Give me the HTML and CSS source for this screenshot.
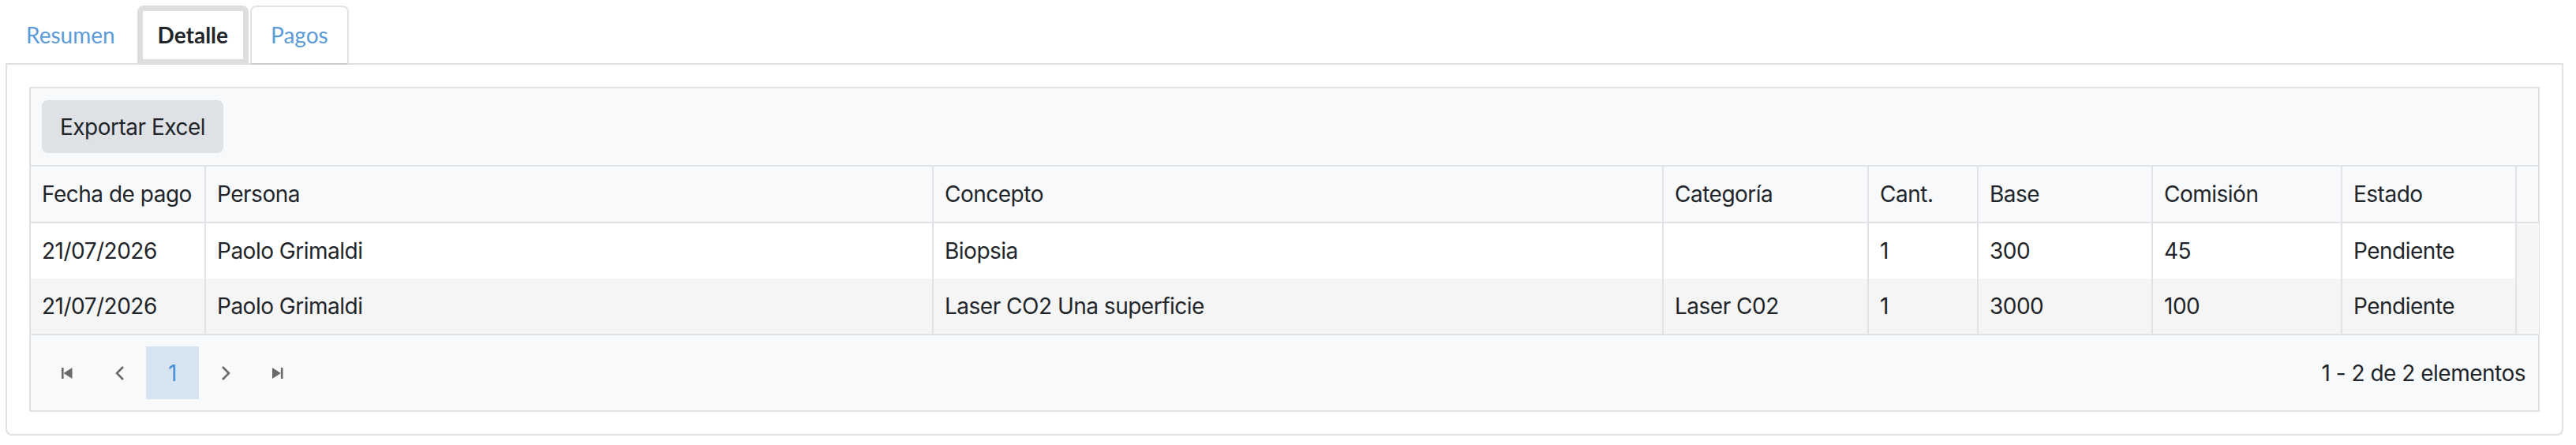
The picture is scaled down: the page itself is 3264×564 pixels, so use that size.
FILE: index.html
```html
<!DOCTYPE html>
<html lang="es">
<head>
<meta charset="utf-8">
<title>Detalle</title>
<link rel="stylesheet" href="styles.css">
</head>
<body>
<div class="tabs">
  <div class="tab">Resumen</div>
  <div class="tab tab-active">Detalle</div>
  <div class="tab tab-plain">Pagos</div>
</div>
<div class="panel">
  <div class="grid">
    <div class="toolbar">
      <button class="btn" type="button">Exportar Excel</button>
    </div>
    <div class="row head">
      <div class="cell">Fecha de pago</div>
      <div class="cell">Persona</div>
      <div class="cell">Concepto</div>
      <div class="cell">Categoría</div>
      <div class="cell">Cant.</div>
      <div class="cell">Base</div>
      <div class="cell">Comisión</div>
      <div class="cell">Estado</div>
      <div class="cell"></div>
    </div>
    <div class="body">
      <div class="row">
        <div class="cell">21/07/2026</div>
        <div class="cell">Paolo Grimaldi</div>
        <div class="cell">Biopsia</div>
        <div class="cell"></div>
        <div class="cell">1</div>
        <div class="cell">300</div>
        <div class="cell">45</div>
        <div class="cell">Pendiente</div>
        <div class="cell gutter"></div>
      </div>
      <div class="row row-alt">
        <div class="cell">21/07/2026</div>
        <div class="cell">Paolo Grimaldi</div>
        <div class="cell">Laser CO2 Una superficie</div>
        <div class="cell">Laser C02</div>
        <div class="cell">1</div>
        <div class="cell">3000</div>
        <div class="cell">100</div>
        <div class="cell">Pendiente</div>
        <div class="cell gutter"></div>
      </div>
    </div>
    <div class="pager">
      <div class="pager-nav">
        <span class="pbtn" aria-label="Primera página">
          <svg width="16" height="16" viewBox="0 0 16 16"><rect x="1" y="1" width="2.6" height="14" fill="currentColor"/><polygon points="14.5,1 3.6,8 14.5,15" fill="currentColor"/></svg>
        </span>
        <span class="pbtn" aria-label="Anterior">
          <svg width="14" height="20" viewBox="0 0 14 20"><polyline points="11,2 3,10 11,18" fill="none" stroke="currentColor" stroke-width="2.6"/></svg>
        </span>
        <span class="pbtn pbtn-current">1</span>
        <span class="pbtn" aria-label="Siguiente">
          <svg width="14" height="20" viewBox="0 0 14 20"><polyline points="3,2 11,10 3,18" fill="none" stroke="currentColor" stroke-width="2.6"/></svg>
        </span>
        <span class="pbtn" aria-label="Última página">
          <svg width="16" height="16" viewBox="0 0 16 16"><polygon points="0,1 10.9,8 0,15" fill="currentColor"/><rect x="10.9" y="1" width="2.6" height="14" fill="currentColor"/></svg>
        </span>
      </div>
      <div class="pager-info">1 - 2 de 2 elementos</div>
    </div>
  </div>
</div>
</body>
</html>
```
FILE: styles.css
```css
body {
  margin: 7px 16px 0 7px;
  font-family: Inter, "Noto Sans", sans-serif;
  color: #212529;
  background: #fff;
}

.tabs {
  display: flex;
  gap: 2px;
  margin-bottom: -2px;
  position: relative;
  z-index: 1;
  font-family: Lato, "Noto Sans", sans-serif;
  font-size: 28px;
  line-height: 43px;
}

.tab {
  padding: 14px 24px;
  border: 2px solid transparent;
  border-radius: 8px 8px 0 0;
  color: #5b9bd8;
}

.tab-active {
  border-color: #dedede;
  box-shadow: inset 0 0 0 5px #dedede;
  background: #fff;
  color: #212529;
  font-weight: 700;
}

.tab-plain {
  border-color: #e3e3e3;
  border-bottom-color: #cdcdcd;
  background: #fff;
}

.panel {
  border: 2px solid #e0e0e0;
  border-radius: 0 0 8px 8px;
  padding: 28px;
}

.grid {
  border: 2px solid #dee2e6;
  font-size: 28px;
  line-height: 40px;
  letter-spacing: -0.5px;
}

.toolbar {
  background: #f8f9fa;
  padding: 15px 14px;
  border-bottom: 2px solid #dee2e6;
}

.btn {
  display: inline-flex;
  align-items: center;
  height: 67px;
  padding: 0 23px;
  border: 0;
  border-radius: 8px;
  background: #dee1e5;
  color: #212529;
  font: inherit;
  letter-spacing: inherit;
}

.row {
  display: grid;
  grid-template-columns: 220px 922px 925px 260px 139px 221px 240px 221px 1fr;
  height: 70px;
}

.cell {
  display: flex;
  align-items: center;
  padding: 0 14px;
  border-left: 2px solid #e1e3e6;
  white-space: nowrap;
  overflow: hidden;
}

.cell:first-child {
  border-left: 0;
}

.head {
  background: #f8f9fa;
  border-bottom: 2px solid #dee2e6;
}

.body {
  border-bottom: 2px solid #dee2e6;
}

.row-alt {
  background: #f5f5f5;
}

.gutter {
  background: #f6f6f6;
}

.pager {
  display: flex;
  align-items: center;
  justify-content: space-between;
  background: #f8f9fa;
  padding: 14px 16px 14px 12px;
}

.pager-nav {
  display: flex;
}

.pbtn {
  display: flex;
  align-items: center;
  justify-content: center;
  width: 67px;
  height: 67px;
  color: #6a6a6a;
}

.pbtn-current {
  background: #d6e4f2;
  color: #4a8fd8;
}
```
